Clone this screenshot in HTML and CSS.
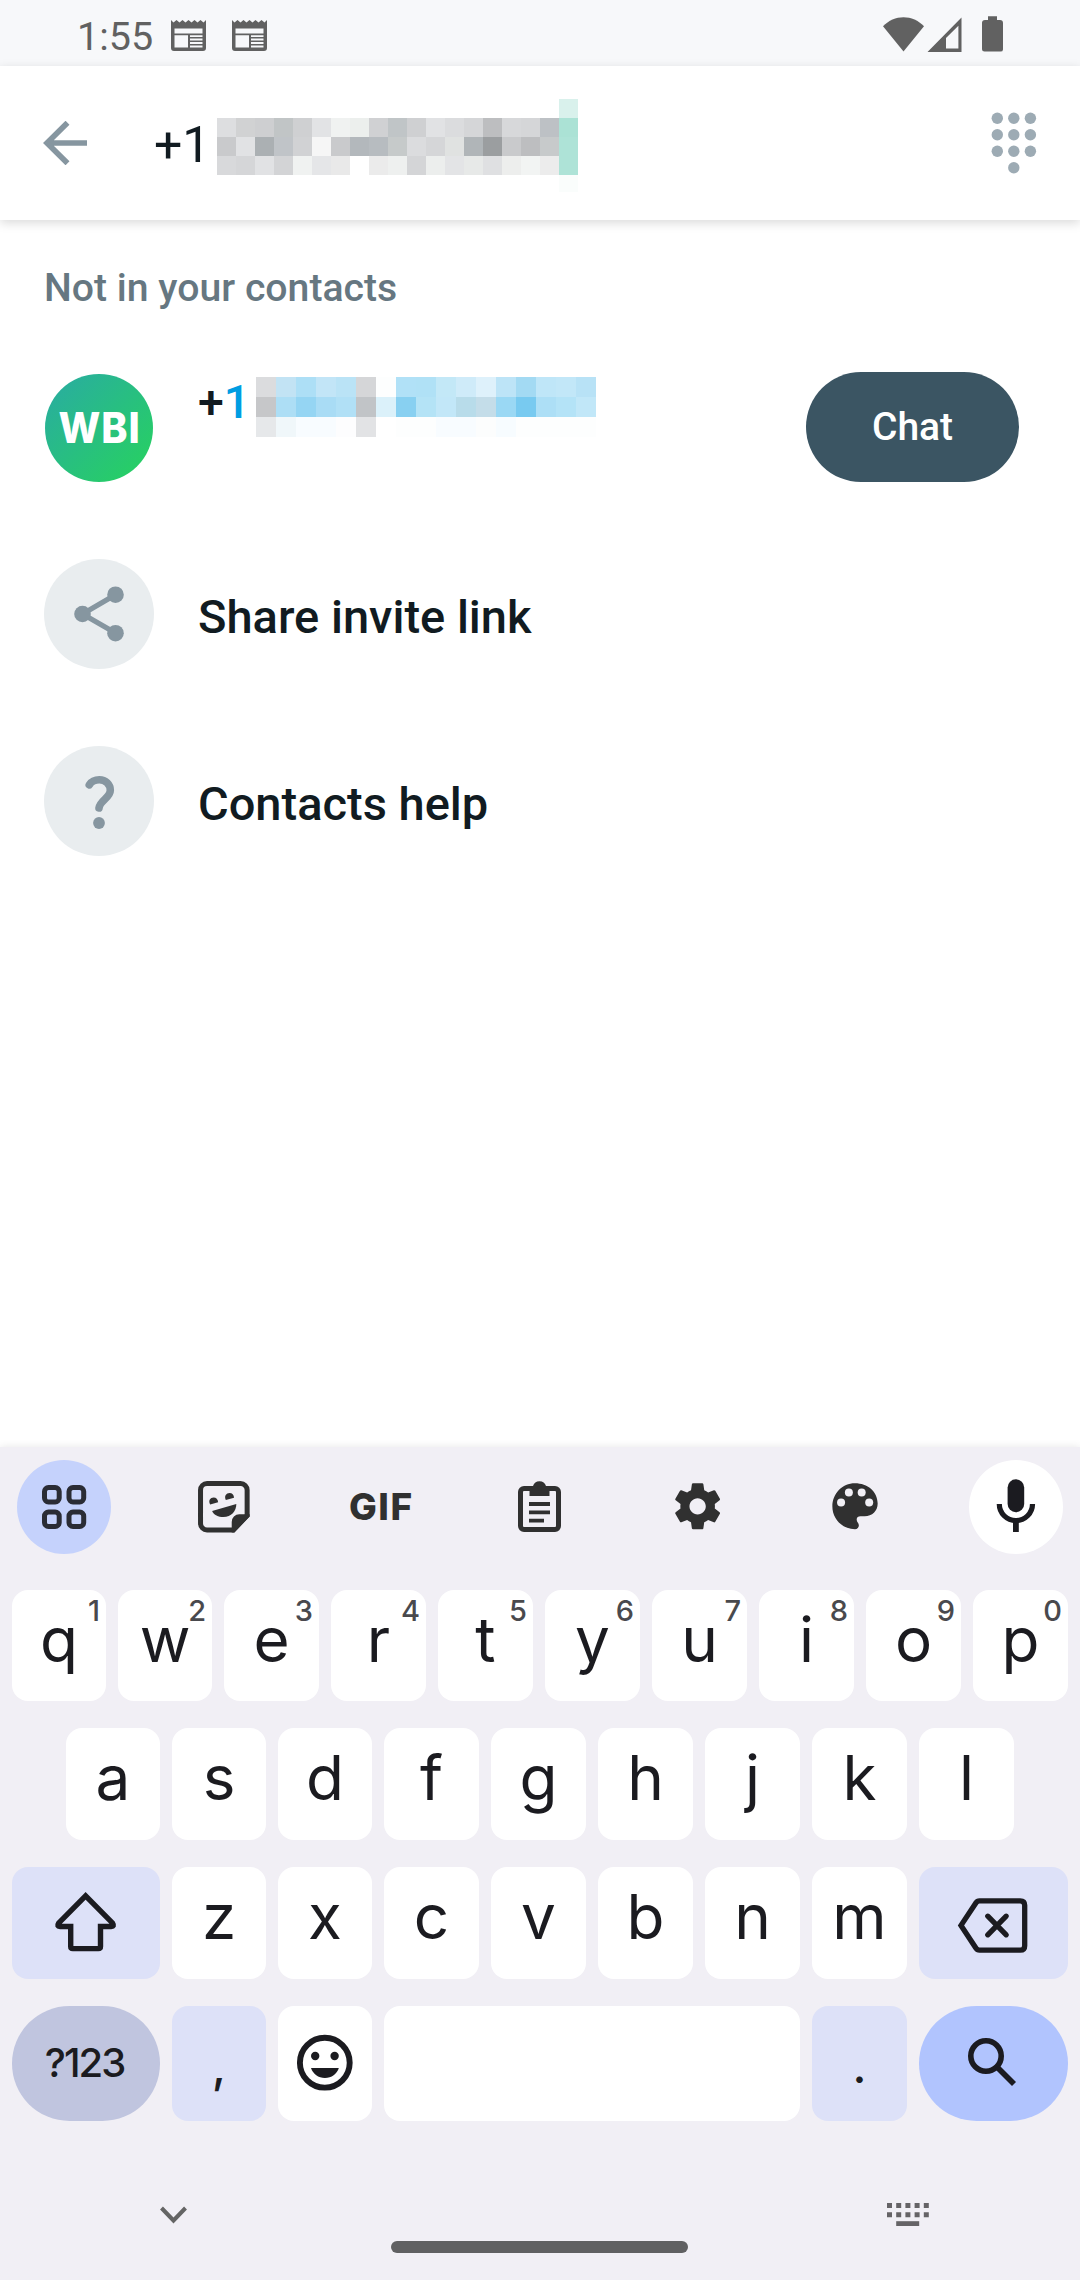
FILE: index.html
```html
<!DOCTYPE html>
<html lang="en">
<head>
<meta charset="utf-8">
<title>Search contacts</title>
<link rel="stylesheet" href="styles.css">
</head>
<body>
<div class="phone">
  <div class="status">
    <span class="clock">1:55</span>
    <svg class="notif" width="35" height="31" viewBox="0 0 35 31"><path fill="#616161" fill-rule="evenodd" d="M0 0L2.5 2.5L5.5 0L8.5 2.5L11.5 0L14.5 2.5L17.5 0L20.5 2.5L23.5 0L26.5 2.5L29.5 0L32.5 2.5L35 0V28A3 3 0 0 1 32 31H3A3 3 0 0 1 0 28ZM3.5 8.5V13.6H31.5V8.5ZM3.5 15.3V27.5H17V15.3ZM19 15.3V17H31.5V15.3ZM19 18.5V20.5H31.5V18.5ZM19 22V24H31.5V22ZM19 25.5V27.5H31.5V25.5Z"/></svg>
    <svg class="notif" width="35" height="31" viewBox="0 0 35 31"><path fill="#616161" fill-rule="evenodd" d="M0 0L2.5 2.5L5.5 0L8.5 2.5L11.5 0L14.5 2.5L17.5 0L20.5 2.5L23.5 0L26.5 2.5L29.5 0L32.5 2.5L35 0V28A3 3 0 0 1 32 31H3A3 3 0 0 1 0 28ZM3.5 8.5V13.6H31.5V8.5ZM3.5 15.3V27.5H17V15.3ZM19 15.3V17H31.5V15.3ZM19 18.5V20.5H31.5V18.5ZM19 22V24H31.5V22ZM19 25.5V27.5H31.5V25.5Z"/></svg>
    <svg class="signals" width="120" height="36" viewBox="0 0 120 36" fill="#616161"><path d="M0 10.3C11-1.9 30-1.9 41 10.3L20.5 35.5Z"/><path fill-rule="evenodd" d="M44.5 36L78.5 1.5V36ZM63 22V32.5H75.4V9.7Z"/><path d="M105 0.3H114V4H117A3 3 0 0 1 120 7V33A2.5 2.5 0 0 1 117.5 35.6H101.500A2.5 2.5 0 0 1 99 33V7A3 3 0 0 1 102 4H105Z"/></svg>
  </div>

  <header class="searchbar">
    <svg width="44" height="44" viewBox="0 0 44 44" fill="none" stroke="#8696a0" stroke-width="5.6"><path d="M24.5 1.700L4 22L24.500 42.300M4 22H44"/></svg>
    <span class="query">+1</span>
    <svg class="mosaic" id="query-mask" width="361" height="93" viewBox="0 0 361 93" shape-rendering="crispEdges"></svg>
    <svg class="dialpad" width="46" height="62" viewBox="0 0 46 62" fill="#9dabb4"><circle cx="6.300" cy="6.300" r="5.700"/><circle cx="22.800" cy="6.300" r="5.700"/><circle cx="39.400" cy="6.300" r="5.700"/><circle cx="6.300" cy="22.700" r="5.700"/><circle cx="22.800" cy="22.700" r="5.700"/><circle cx="39.400" cy="22.700" r="5.700"/><circle cx="6.300" cy="39.300" r="5.700"/><circle cx="22.800" cy="39.300" r="5.700"/><circle cx="39.400" cy="39.300" r="5.700"/><circle cx="22.800" cy="55.700" r="5.700"/></svg>
  </header>

  <main class="results">
    <h2 class="section">Not in your contacts</h2>
    <div class="row">
      <div class="avatar"><span class="avatar-text">WBI</span></div>
      <div class="contact"><span class="number">+<span class="match">1</span></span><svg class="mosaic" id="contact-mask" width="340" height="60" viewBox="0 0 340 60" shape-rendering="crispEdges"></svg></div>
      <button class="chat">Chat</button>
    </div>
    <div class="row">
      <div class="disc"><svg width="110" height="110" viewBox="0 0 110 110" fill="#8696a0"><path d="M71.500 35.700L38.500 55L71.500 74" fill="none" stroke="#8696a0" stroke-width="5.200"/><circle cx="38.500" cy="55" r="8.300"/><circle cx="71.500" cy="35.700" r="8.300"/><circle cx="71.500" cy="74.200" r="8.300"/></svg></div>
      <span class="label">Share invite link</span>
    </div>
    <div class="row row-last">
      <div class="disc"><svg width="110" height="110" viewBox="0 0 110 110" fill="none" stroke="#8696a0" stroke-width="7.600" stroke-linecap="round"><path d="M45.300 38.800C47.500 35.500 51 33.800 55.300 33.800C61.500 33.800 66.300 38.300 66.300 44.300C66.300 52 56 54 55 62"/><circle cx="55" cy="77" r="5.900" fill="#8696a0" stroke="none"/></svg></div>
      <span class="label">Contacts help</span>
    </div>
  </main>

  <section class="keyboard">
    <div class="tools">
      <div class="tool tool-active"><svg width="94" height="94" viewBox="17 1460 94 94" fill="none" stroke="#2a2c35" stroke-width="5"><rect x="44.500" y="1487.500" width="14.700" height="14.500" rx="4"/><rect x="69" y="1487.500" width="14.700" height="14.500" rx="4"/><rect x="44.500" y="1512" width="14.700" height="14.500" rx="4"/><rect x="69" y="1512" width="14.700" height="14.500" rx="4"/></svg></div>
      <div class="tool"><svg width="94" height="94" viewBox="175.670 1460 94 94" fill="#303030"><path d="M246.800 1515.500V1490A6.500 6.500 0 0 0 240.300 1483.500H206.700A6.500 6.500 0 0 0 200.200 1490V1523.500A6.500 6.500 0 0 0 206.700 1530H233L246.800 1515.500Z" fill="none" stroke="#303030" stroke-width="5"/><path d="M249.300 1514.300H239A7.600 7.600 0 0 0 231.400 1522V1532.500H234L249.300 1516.500Z"/><path d="M209.800 1504.500C207.600 1500.500 210 1497.600 213.300 1497.600C215.800 1497.600 217.600 1499.300 217.800 1502.200Z"/><path d="M225.500 1500C223.500 1496 226 1493 229.200 1493C231.800 1493 233.600 1495 233.700 1497.700Z"/><path d="M211.800 1511L236 1504C236 1511 231 1517 223 1517C218 1517 213.500 1515 211.800 1511Z"/></svg></div>
      <div class="tool gif">GIF</div>
      <div class="tool"><svg width="94" height="94" viewBox="493 1460 94 94" fill="none" stroke="#303030"><rect x="520.500" y="1488.500" width="38" height="41" rx="3.500" stroke-width="5"/><path fill="#303030" stroke="none" fill-rule="evenodd" d="M529.500 1486H533A6.800 6.800 0 0 1 546 1486H549.500V1496H529.500ZM539.500 1486.200A2.400 2.400 0 1 0 539.500 1491A2.400 2.400 0 1 0 539.500 1486.200Z"/><path stroke-width="3.800" d="M529 1504H550M529 1512.300H550M529 1520.700H544"/></svg></div>
      <div class="tool"><svg width="94" height="94" viewBox="651.670 1460 94 94"><path transform="translate(668.500 1477.500) scale(2.400)" fill="#303030" d="M19.140 12.940c.04-.3.06-.61.06-.94 0-.32-.02-.64-.07-.94l2.030-1.580c.18-.14.23-.41.12-.61l-1.920-3.320c-.12-.22-.37-.29-.59-.22l-2.390.96c-.5-.38-1.030-.7-1.620-.94l-.36-2.540c-.04-.24-.24-.41-.48-.41h-3.840c-.24 0-.43.17-.47.41l-.36 2.540c-.59.24-1.130.57-1.620.94l-2.390-.96c-.22-.08-.47 0-.59.22L2.740 8.870c-.12.21-.08.47.12.61l2.030 1.580c-.05.3-.09.63-.09.94s.02.64.07.94l-2.030 1.580c-.18.14-.23.41-.12.61l1.920 3.320c.12.22.37.29.59.22l2.390-.96c.5.38 1.030.7 1.620.94l.36 2.540c.05.24.24.41.48.41h3.840c.24 0 .44-.17.47-.41l.36-2.540c.59-.24 1.130-.56 1.620-.94l2.390.96c.22.08.47 0 .59-.22l1.920-3.320c.12-.22.07-.47-.12-.61l-2.010-1.580zM12 15.400c-1.870 0-3.400-1.530-3.400-3.400s1.530-3.400 3.400-3.400 3.400 1.530 3.400 3.400-1.530 3.400-3.400 3.400z"/></svg></div>
      <div class="tool"><svg width="94" height="94" viewBox="810.330 1460 94 94"><path fill="#303030" d="M855.300 1483.300C842.500 1483.300 832.700 1493.800 832.700 1506.500C832.700 1519 842.800 1529.200 855.300 1529.200C857.700 1529.200 859.200 1527.500 859.200 1525.200C859.200 1523.200 857 1522 857 1519.500C857 1517.300 858.700 1516.300 860.700 1516.300H865C872.500 1516.300 878 1511 878 1503.500C878 1491.500 867.800 1483.300 855.300 1483.300Z"/><g fill="#f1eff5"><circle cx="841.400" cy="1502.500" r="4"/><circle cx="849.200" cy="1492.400" r="4"/><circle cx="862" cy="1492.400" r="4"/><circle cx="869.500" cy="1502.500" r="4"/></g></svg></div>
      <div class="tool tool-mic"><svg width="94" height="94" viewBox="969 1460 94 94" fill="none" stroke="#1b1b20"><rect x="1007.600" y="1479.300" width="16.600" height="33" rx="8.300" fill="#1b1b20" stroke="none"/><path stroke-width="5.200" d="M999.300 1504A16.600 16.600 0 0 0 1032.500 1504"/><path stroke-width="5.800" d="M1015.900 1520V1532"/></svg></div>
    </div>

    <div class="keys keys-1">
      <div class="key">q<span class="hint">1</span></div><div class="key">w<span class="hint">2</span></div><div class="key">e<span class="hint">3</span></div><div class="key">r<span class="hint">4</span></div><div class="key">t<span class="hint">5</span></div><div class="key">y<span class="hint">6</span></div><div class="key">u<span class="hint">7</span></div><div class="key">i<span class="hint">8</span></div><div class="key">o<span class="hint">9</span></div><div class="key">p<span class="hint">0</span></div>
    </div>
    <div class="keys keys-2">
      <div class="key">a</div><div class="key">s</div><div class="key">d</div><div class="key">f</div><div class="key">g</div><div class="key">h</div><div class="key">j</div><div class="key">k</div><div class="key">l</div>
    </div>
    <div class="keys keys-3">
      <div class="key key-mod"><svg width="148" height="112" viewBox="12 1867 148 112" fill="none" stroke="#1b1b20" stroke-width="5.400"><path d="M85.600 1895.800L58.600 1923.200Q56.500 1926.500 60 1926.500H70.700V1946.500Q70.700 1948.600 72.800 1948.600H98.400Q100.500 1948.600 100.500 1946.500V1926.500H111.200Q114.700 1926.500 112.600 1923.200Z"/></svg></div>
      <div class="key">z</div><div class="key">x</div><div class="key">c</div><div class="key">v</div><div class="key">b</div><div class="key">n</div><div class="key">m</div>
      <div class="key key-mod"><svg width="149" height="112" viewBox="919 1867 149 112" fill="none" stroke="#1b1b20" stroke-width="5.300"><path d="M961 1925.400L976 1902.800Q977.200 1900.800 979.500 1900.800H1020.200Q1024.700 1900.800 1024.700 1905.300V1945.700Q1024.700 1950.200 1020.200 1950.200H979.500Q977.200 1950.200 976 1948.200Z"/><path stroke-linecap="round" d="M987.800 1916.200L1006.200 1934.800M1006.200 1916.200L987.800 1934.800"/></svg></div>
    </div>
    <div class="keys keys-4">
      <div class="key key-sym">?123</div>
      <div class="key key-mod key-punct">,</div>
      <div class="key"><svg width="94" height="115" viewBox="278 2006 94 115" fill="#1b1b20"><circle cx="324.800" cy="2062.700" r="24.900" fill="none" stroke="#1b1b20" stroke-width="5.900"/><circle cx="315.200" cy="2056" r="4.200"/><circle cx="334.600" cy="2056" r="4.200"/><path d="M311 2068H338.800C337 2074 331.500 2078 324.900 2078S313 2074 311 2068Z"/></svg></div>
      <div class="key"></div>
      <div class="key key-mod key-punct">.</div>
      <div class="key key-search"><svg width="149" height="115" viewBox="919 2006 149 115" fill="none" stroke="#1b1b20"><circle cx="986" cy="2056" r="15.200" stroke-width="5.600"/><path stroke-width="5.600" d="M997 2067L1014 2084"/></svg></div>
    </div>

    <div class="nav">
      <svg width="27" height="18" viewBox="0 0 27 18" fill="none" stroke="#646464" stroke-width="4"><path d="M1.500 2L13.500 14.500L25.500 2"/></svg>
      <svg width="42" height="23" viewBox="0 0 42 23" fill="none" stroke="#656366" stroke-width="5"><path stroke-dasharray="5 4.200" d="M0 2.500H42M0 11.700H42"/><path d="M9.200 20.700H32.200"/></svg>
    </div>
    <div class="home"></div>
  </section>
</div>
<script src="mosaic.js"></script>
</body>
</html>
```

FILE: styles.css
```css
* { box-sizing: border-box; }
body { margin: 0; background: #fff; font-family: Roboto, "Liberation Sans", sans-serif; }
svg { display: block; flex: none; }

.phone { width: 1080px; height: 2280px; display: flex; flex-direction: column; overflow: hidden; }

.status { height: 66px; flex: none; display: flex; align-items: flex-start; padding: 0 77px 0 77px; background: #f7f8fa; }
.clock { width: 94px; padding-top: 14px; font-size: 39.5px; line-height: 45px; color: #616161; }
.notif { margin: 20px 26px 0 0; }
.signals { margin: 16px 0 0 auto; }

.searchbar { height: 154px; flex: none; display: flex; align-items: center; padding: 0 43px; background: #fff; box-shadow: 0 3px 10px rgba(0, 0, 0, .15); z-index: 1; }
.query { width: 63px; margin-left: 67px; padding-top: 4px; font-size: 50px; line-height: 60px; color: #111b21; }
.searchbar .mosaic { margin-top: 5px; }
.dialpad { margin-left: auto; }

.section { margin: 45px 0 24px 44px; font-size: 39.200px; line-height: 46px; font-weight: 500; color: #667781; }
.row { height: 186px; display: flex; align-items: center; padding: 0 61px 0 44px; gap: 44px; }
.row-last { height: 188px; }
.avatar { width: 108px; height: 108px; margin: 0 1px; border-radius: 50%; background: linear-gradient(135deg, #29ae9e 8%, #27cf64 90%); display: flex; align-items: center; justify-content: center; }
.avatar-text { font: 800 42px/50px Inter, sans-serif; letter-spacing: 1px; margin-right: -1px; color: #fff; transform: scaleX(.94); }
.contact { flex: 1; display: flex; align-self: flex-start; padding-top: 42px; }
.number { width: 58px; font-size: 46.500px; line-height: 51px; font-weight: 500; color: #111b21; }
.match { color: #009de2; }
.chat { width: 213px; height: 110px; margin-bottom: 2px; border: 0; border-radius: 55px; background: #3b5563; color: #fff; font: 500 39px/46px Roboto, sans-serif; padding: 0; }
.disc { width: 110px; height: 110px; border-radius: 50%; background: #e9edef; }
.label { padding-top: 5px; font-size: 47px; line-height: 56px; font-weight: 500; color: #111b21; }

.keyboard { height: 833px; flex: none; margin-top: auto; padding-top: 13px; background: #f1eff5; box-shadow: 0 0 8px rgba(0, 0, 0, .1); }
.tools { display: flex; justify-content: space-between; padding: 0 17px; margin-bottom: 36px; }
.tool { width: 94px; height: 94px; border-radius: 50%; }
.tool-active { background: #c5d2fc; }
.tool-mic { background: #fff; }
.gif { font: 800 37px/94px Inter, sans-serif; letter-spacing: 1.500px; text-align: center; color: #303030; }

.keys { display: grid; gap: 12px; padding: 0 12px; margin-bottom: 27px; }
.keys-1 { grid-template-columns: repeat(2, 94px) repeat(8, 95px); grid-auto-rows: 111px; }
.keys-2 { grid-template-columns: repeat(3, 94px) repeat(6, 95px); grid-auto-rows: 112px; padding: 0 66px; }
.keys-3 { grid-template-columns: 148px repeat(2, 94px) repeat(5, 95px) 149px; grid-auto-rows: 112px; }
.keys-4 { grid-template-columns: 148px 94px 94px 1fr 95px 149px; grid-auto-rows: 115px; margin-bottom: 0; }
.key { position: relative; border-radius: 16px; background: #fff; text-align: center; font: 400 62px/99px Inter, sans-serif; color: #1b1b20; }
.hint { position: absolute; top: 4px; right: 6px; font-size: 29px; line-height: 34px; font-weight: 500; color: #49494d; }
.key-mod { background: #dde1f8; }
.key-sym { border-radius: 58px; background: #c0c5df; padding-right: 3px; font-size: 40px; line-height: 113px; font-weight: 500; letter-spacing: -2px; }
.key-punct { font-size: 46px; line-height: 120px; font-weight: 500; }
.key-search { border-radius: 58px; background: #b1c4fe; }

.nav { display: flex; justify-content: space-between; align-items: center; padding: 82px 151px 0 160px; }
.home { width: 297px; height: 12px; margin: 15px 0 0 391px; border-radius: 6px; background: #606062; }
```

FILE: mosaic.js
```js
// Each mask is a set of rows of coloured cells laid over a hidden phone number.
function drawMosaic(id, w, h, top, rows) {
  const svg = document.getElementById(id);
  rows.forEach((row, r) => row.split(' ').forEach((color, c) => {
    const cell = document.createElementNS('http://www.w3.org/2000/svg', 'rect');
    cell.setAttribute('x', c * w);
    cell.setAttribute('y', top + r * h);
    cell.setAttribute('width', w);
    cell.setAttribute('height', h);
    cell.setAttribute('fill', '#' + color);
    svg.appendChild(cell);
  }));
}

drawMosaic('query-mask', 19, 19, 0, [
  'fff fff fff fff fff fff fff fff fff fff fff fff fff fff fff fff fff fff d9f1ec',
  'dddee0 d1d2d3 cecfd1 c1c5c6 cfd0d2 e2e3e5 f0f2f1 ecefed d0d1d3 c0c5c7 cfd0d2 e1e2e4 dbdcde d5d6d8 bdbec0 d7d8da d5d6d8 bdc1c5 abe2d5',
  'c9cacc e1e2e4 abb0b3 c0c4c8 d1d2d4 f6f6f6 c9cacc b3b8bc b7bcc0 c6caca dbdcde d5d6d8 e0e2e1 b0b5b8 9b9ea0 c9cacc bdbec0 c7cacb aee3d7',
  'd8d9db d5d6d8 e1e2e4 d3d4d6 f0f2f1 e5e6e8 e9e9e9 ffffff ebebeb eef0ef d4d5d7 eceeed e3e4e6 e7e9e8 dfe0e2 edeeed f2f4f3 ececec aee3d7',
  'fff fff fff fff fff fff fff fff fff fff fff fff fff fff fff fff fff fff fafdfc'
]);

drawMosaic('contact-mask', 20, 20, 0, [
  'dbdcde c2e3f4 addff6 c2e5f7 bae3f6 d5d6d8 fdfefe b1e1f7 b0e1f6 c3e8f7 cfebf9 def1fb bde4f7 a3daf3 bfe6f8 c2e7f8 b8e2f6',
  'c6c7c9 addef5 95d5f3 a9dcf5 b1e0f6 c1c4c7 dbf1fa 88d0f1 b4e3f6 c2e7f8 b8dcea c4dde9 9ad8f4 78caf0 addff6 b4e3f7 c1e7f8',
  'e6e8ea f0f7fa f8fcff f8fcff fdfdfe e2e3e5 ffffff fdfefe fdfefe f8fcff f8fcff fcfdfd f7fcff fdfefe fdfefe fdfefe fdfefe'
]);
```
